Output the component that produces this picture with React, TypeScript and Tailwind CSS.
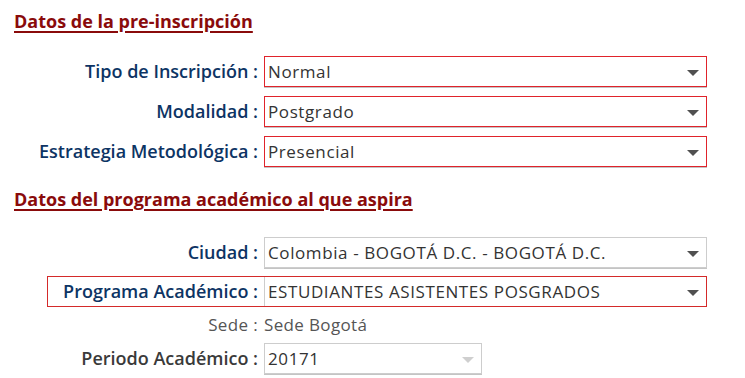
import React from 'react'

const LABEL = 'text-[#0d3464] font-semibold'
const VALUE = 'text-[17px] tracking-[0.6px] text-[#333]'

function Arrow({ light }: { light?: boolean }) {
  return (
    <svg width="12" height="7" viewBox="0 0 12 7" className="mt-[3px]">
      <path d="M0 0 H12 L6 6 Z" fill={light ? '#cfcfcf' : '#505050'} />
    </svg>
  )
}

function Select({
  value,
  red,
  light,
  width = 'w-[443px]',
}: {
  value: string
  red?: boolean
  light?: boolean
  width?: string
}) {
  return (
    <div
      className={`flex h-[31px] ${width} border bg-white shadow-[0_1px_0_#c4c4c4] ${
        red ? 'border-[#e0232b]' : 'border-[#cdcdcd]'
      }`}
    >
      <div className={`flex flex-1 items-center pl-[3px] ${VALUE}`}>{value}</div>
      <div className="flex w-[26px] items-center justify-center">
        <Arrow light={light} />
      </div>
    </div>
  )
}

function Row({ label, children, labelClass = LABEL }: { label: string; children: React.ReactNode; labelClass?: string }) {
  return (
    <div className="flex items-center">
      <div className={`w-[264px] pr-[6px] text-right text-[18px] ${labelClass}`}>{label} :</div>
      {children}
    </div>
  )
}

export default function App() {
  return (
    <div
      className="h-[378px] w-[745px] overflow-hidden bg-white"
      style={{ fontFamily: '"Open Sans", "Noto Sans", sans-serif' }}
    >
      <h2 className="pl-[14px] pt-[8px] text-[18px] font-bold text-[#8a0b0b] underline decoration-[1.5px] underline-offset-[3px]">
        Datos de la pre-inscripción
      </h2>

      <div className="mt-[21px] flex flex-col gap-[9px]">
        <Row label="Tipo de Inscripción">
          <Select value="Normal" red />
        </Row>
        <Row label="Modalidad">
          <Select value="Postgrado" red />
        </Row>
        <Row label="Estrategia Metodológica">
          <Select value="Presencial" red />
        </Row>
      </div>

      <h2 className="mt-[19px] pl-[14px] text-[18px] font-bold text-[#8a0b0b] underline decoration-[1.5px] underline-offset-[3px]">
        Datos del programa académico al que aspira
      </h2>

      <div className="mt-[24px] flex flex-col">
        <Row label="Ciudad">
          <Select value="Colombia - BOGOTÁ D.C. - BOGOTÁ D.C." />
        </Row>
        <div className="ml-[47px] mt-[8px] flex w-[660px] items-center border border-[#d42a2a]">
          <div className={`w-[216px] pr-[6px] text-right text-[18px] ${LABEL}`}>Programa Académico :</div>
          <div className="flex h-[29px] flex-1 border-l border-[#cdcdcd]">
            <div className={`flex flex-1 items-center pl-[3px] ${VALUE}`}>
              ESTUDIANTES ASISTENTES POSGRADOS
            </div>
            <div className="flex w-[26px] items-center justify-center">
              <Arrow />
            </div>
          </div>
        </div>
        <div className="mt-[5px] flex h-[26px] items-center">
          <div className="w-[264px] pr-[6px] text-right text-[17px] tracking-[0.35px] text-[#555]">Sede :</div>
          <div className="text-[17px] tracking-[0.35px] text-[#555]">Sede Bogotá</div>
        </div>
        <div className="mt-[5px]">
          <Row label="Periodo Académico" labelClass="font-semibold text-[#3a3a3a]">
            <Select value="20171" light width="w-[218px]" />
          </Row>
        </div>
      </div>
    </div>
  )
}
